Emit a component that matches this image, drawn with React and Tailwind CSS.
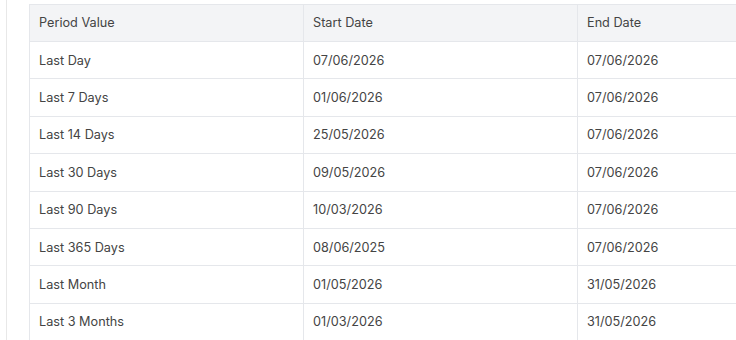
import React from "react";

const rows = [
  ["Last Day", "07/06/2026", "07/06/2026"],
  ["Last 7 Days", "01/06/2026", "07/06/2026"],
  ["Last 14 Days", "25/05/2026", "07/06/2026"],
  ["Last 30 Days", "09/05/2026", "07/06/2026"],
  ["Last 90 Days", "10/03/2026", "07/06/2026"],
  ["Last 365 Days", "08/06/2025", "07/06/2026"],
  ["Last Month", "01/05/2026", "31/05/2026"],
  ["Last 3 Months", "01/03/2026", "31/05/2026"],
];

export default function App() {
  return (
    <div className="w-[736px] h-[340px] overflow-hidden bg-white flex" style={{ fontFamily: "Inter, sans-serif" }}>
      <div className="w-[7px] shrink-0 border-r border-[#e8e8e8]" />
      <div className="pl-[22px] pt-[4px] shrink-0">
        <table className="border-collapse table-fixed w-[830px] text-[12.7px] text-[#444]">
          <colgroup>
            <col className="w-[274px]" />
            <col className="w-[274px]" />
            <col />
          </colgroup>
          <thead>
            <tr className="bg-[#f3f4f6]">
              {["Period Value", "Start Date", "End Date"].map((h) => (
                <th
                  key={h}
                  className="h-[37px] px-[9px] text-left font-normal border border-[#e5e7eb]"
                >
                  {h}
                </th>
              ))}
            </tr>
          </thead>
          <tbody>
            {rows.map((r) => (
              <tr key={r[0]}>
                {r.map((c, i) => (
                  <td key={i} className="h-[37.4px] px-[9px] border border-[#e5e7eb]">
                    {c}
                  </td>
                ))}
              </tr>
            ))}
          </tbody>
        </table>
      </div>
    </div>
  );
}
